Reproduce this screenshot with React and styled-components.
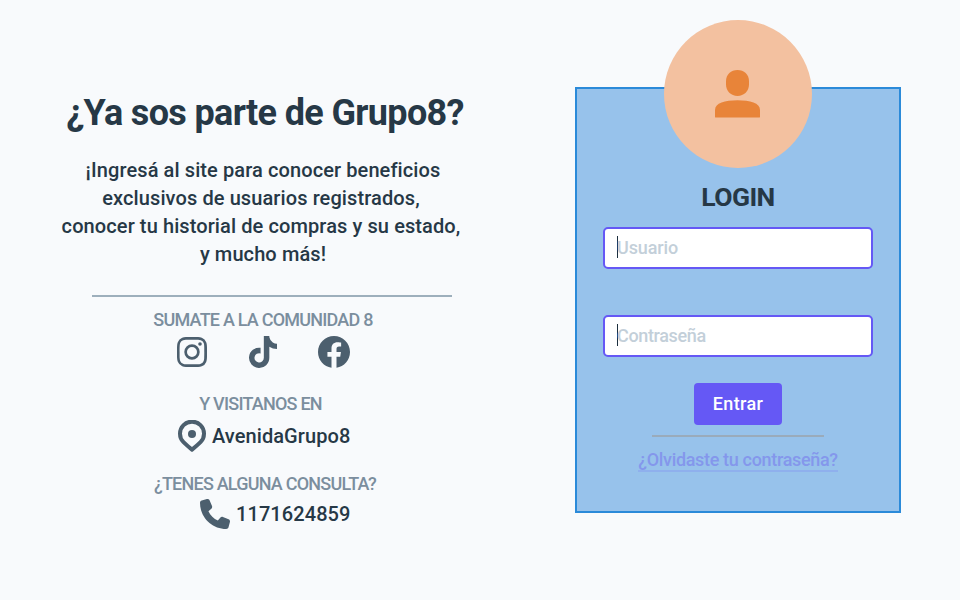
import React from 'react';
import styled, { createGlobalStyle } from 'styled-components';
import { BiLogoInstagram } from 'react-icons/bi';
import { FaTiktok, FaFacebook } from 'react-icons/fa';
import { FaPhone } from 'react-icons/fa6';

const ink = '#263846';
const iconInk = '#4c5f6e';
const purple = '#6558f5';

const GlobalStyle = createGlobalStyle`
  *, *::before, *::after { box-sizing: border-box; }
  body {
    margin: 0;
    background: #f8fafc;
    color: ${ink};
    font-family: Roboto, "Liberation Sans", sans-serif;
    font-weight: 500;
  }
  h1, h2, p { margin: 0; }
`;

const Page = styled.main`
  display: grid;
  grid-template-columns: 526px 326px;
  column-gap: 49px;
  width: 960px;
  height: 600px;
  overflow: hidden;
`;

const Info = styled.section`
  display: flex;
  flex-direction: column;
  align-items: center;
  padding-top: 91px;
`;

const Title = styled.h1`
  padding-left: 4px;
  font-size: 36px;
  font-weight: 700;
  line-height: 44px;
  letter-spacing: -0.65px;
  white-space: nowrap;
`;

const Intro = styled.div`
  margin-top: 21px;
  text-align: center;
`;

const IntroLine = styled.p`
  padding-right: ${(p) => p.$inset || 0}px;
  font-size: 20px;
  line-height: 28px;
  letter-spacing: 0.1px;
  white-space: nowrap;
`;

const Divider = styled.hr`
  flex: none;
  width: ${(p) => p.$width}px;
  height: 2px;
  margin: 0;
  border: 0;
  background: #9dafbc;
`;

const InfoDivider = styled(Divider)`
  margin: 27px 0 11px 18px;
`;

const Label = styled.p`
  padding-left: ${(p) => p.$start || 0}px;
  padding-right: ${(p) => p.$end || 0}px;
  color: #7b8e9e;
  font-size: 18px;
  line-height: 24px;
  letter-spacing: -0.78px;
  white-space: nowrap;
`;

const Socials = styled.div`
  display: flex;
  align-items: center;
  width: 173px;
  height: 32px;
  margin: 4px 0 24px 1px;
  justify-content: space-between;
  color: ${iconInk};
  svg { display: block; }
`;

const Contact = styled.div`
  display: flex;
  align-items: center;
  align-self: flex-start;
  gap: ${(p) => p.$gap}px;
  height: 32px;
  margin: ${(p) => p.$top}px 0 20px ${(p) => p.$left}px;
  font-size: 20px;
  line-height: 32px;
  letter-spacing: 0.08px;
  svg { display: block; color: ${iconInk}; }
`;

const Card = styled.form`
  display: flex;
  flex-direction: column;
  align-items: center;
  width: 326px;
  height: 426px;
  margin-top: 87px;
  border: 2px solid #2b8ad9;
  background: #97c2eb;
`;

const Avatar = styled.div`
  display: flex;
  flex: none;
  justify-content: center;
  width: 148px;
  height: 148px;
  margin-top: -69px;
  padding: 50px 1px 0 0;
  border-radius: 50%;
  background: #f3c1a0;
`;

const Heading = styled.h2`
  margin: 13px 0 14px;
  font-size: 26.5px;
  font-weight: 700;
  line-height: 32px;
  letter-spacing: -0.6px;
`;

const Field = styled.div`
  display: flex;
  flex: none;
  align-items: flex-start;
  width: 270px;
  height: 42px;
  margin-bottom: ${(p) => p.$after}px;
  padding-left: 12px;
  border: 2px solid ${purple};
  border-radius: 5px;
  background: #fff;
`;

const Caret = styled.span`
  width: 1px;
  height: 22px;
  margin: 7px -1px 0 0;
  background: #1c2f3e;
`;

const Input = styled.input`
  width: 240px;
  height: 36px;
  padding: 0;
  border: 0;
  outline: 0;
  background: transparent;
  color: ${ink};
  font: 500 18px/24px Roboto, "Liberation Sans", sans-serif;
  letter-spacing: ${(p) => p.$tracking}px;
  &::placeholder { color: #c3cfd9; opacity: 1; }
`;

const Submit = styled.button`
  width: 88px;
  height: 42px;
  margin-bottom: 10px;
  padding: 0;
  border: 0;
  border-radius: 4px;
  background: ${purple};
  color: #fff;
  font: 500 18px/42px Roboto, "Liberation Sans", sans-serif;
  letter-spacing: 0.35px;
`;

const CardDivider = styled(Divider)`
  background: #9aabbb;
`;

const Forgot = styled.a`
  height: 24px;
  margin-top: 11px;
  border-bottom: 2px solid #8fb0ed;
  color: #8497ec;
  font-size: 18px;
  line-height: 24px;
  letter-spacing: -0.33px;
  white-space: nowrap;
`;

const PinIcon = () => (
  <svg width="28" height="32" viewBox="0 0 28 32" fill="none">
    <path
      d="M5.5 22.1A12 12 0 1 1 22.5 22.1Q18.5 26 14 29.6Q9.500 26 5.500 22.1Z"
      stroke="currentColor"
      strokeWidth="4"
      strokeLinejoin="round"
    />
    <circle cx="14" cy="14" r="4" fill="currentColor" />
  </svg>
);

const PersonIcon = () => (
  <svg width="45" height="48" viewBox="0 0 45 48" fill="#e88439">
    <path d="M11 11C11 4.500 16 0 22.500 0S34 4.500 34 11V14.500C34 21 29 26 22.500 26S11 21 11 14.500Z" />
    <path d="M0 47V40C0 33 10 30.300 22.500 30.300S45 33 45 40V47Q45 47.600 44 47.600H1Q0 47.600 0 47Z" />
  </svg>
);

export default function App() {
  return (
    <Page>
      <GlobalStyle />
      <Info>
        <Title>¿Ya sos parte de Grupo8?</Title>
        <Intro>
          <IntroLine>¡Ingresá al site para conocer beneficios</IntroLine>
          <IntroLine $inset={4}>exclusivos de usuarios registrados,</IntroLine>
          <IntroLine $inset={4}>conocer tu historial de compras y su estado,</IntroLine>
          <IntroLine>y mucho más!</IntroLine>
        </Intro>
        <InfoDivider $width={360} />
        <Label>SUMATE A LA COMUNIDAD 8</Label>
        <Socials>
          <BiLogoInstagram viewBox="3 3 18 18" size={30} />
          <FaTiktok size={32} />
          <FaFacebook viewBox="8 8 496 496" size={32} />
        </Socials>
        <Label $end={5}>Y VISITANOS EN</Label>
        <Contact $gap={6} $left={178} $top={4}>
          <PinIcon />
          AvenidaGrupo8
        </Contact>
        <Label $start={4}>¿TENES ALGUNA CONSULTA?</Label>
        <Contact $gap={6} $left={200} $top={2}>
          <FaPhone size={30} />
          1171624859
        </Contact>
      </Info>
      <Card onSubmit={(e) => e.preventDefault()}>
        <Avatar>
          <PersonIcon />
        </Avatar>
        <Heading>LOGIN</Heading>
        <Field $after={46}>
          <Caret />
          <Input placeholder="Usuario" aria-label="Usuario" $tracking={-0.1} />
        </Field>
        <Field $after={26}>
          <Caret />
          <Input type="password" placeholder="Contraseña" aria-label="Contraseña" $tracking={-0.35} />
        </Field>
        <Submit type="submit">Entrar</Submit>
        <CardDivider $width={172} />
        <Forgot>¿Olvidaste tu contraseña?</Forgot>
      </Card>
    </Page>
  );
}
